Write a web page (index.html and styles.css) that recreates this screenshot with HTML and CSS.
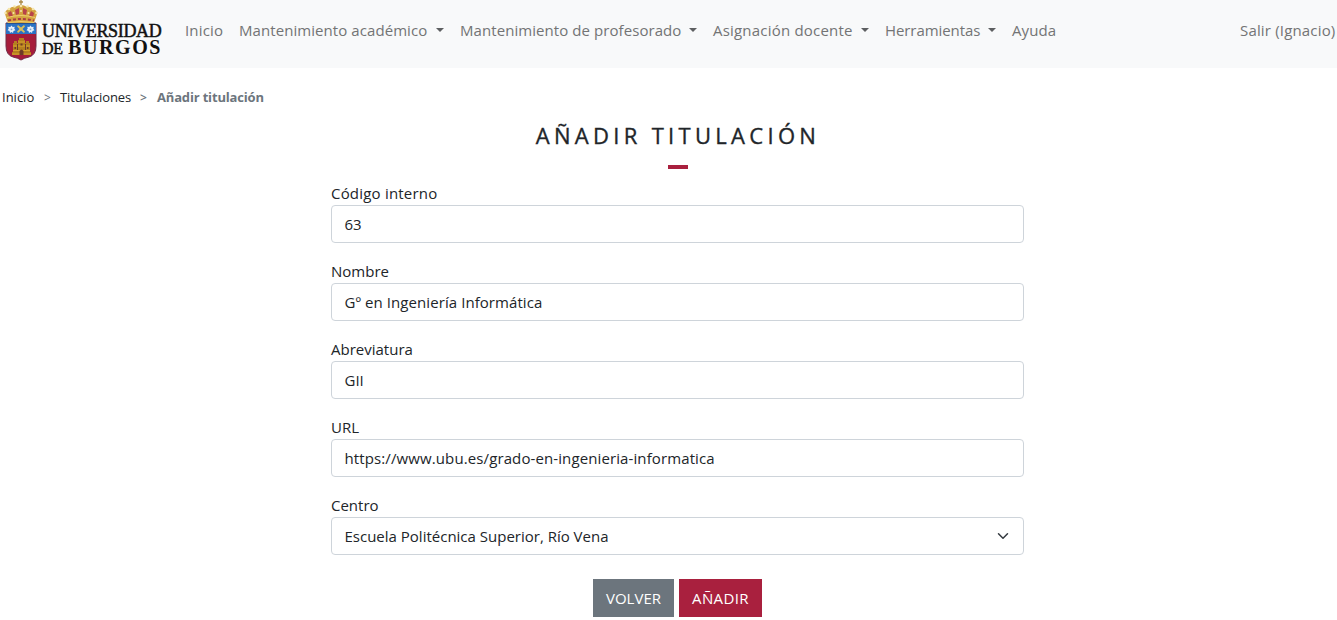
FILE: index.html
```html
<!DOCTYPE html>
<html lang="es">
<head>
<meta charset="utf-8">
<title>Añadir titulación</title>
<link rel="stylesheet" href="styles.css">
</head>
<body>
<header class="navbar">
  <a class="brand" href="#">
    <svg class="crest" viewBox="0 0 36 61" width="36" height="61">
      <path d="M2 23h30v23q0 9-7 11-5 1-8 3-3-2-8-3-7-2-7-11z" fill="#a51c3b" stroke="#722b45" stroke-width="1"/>
      <path d="M2 24h30v10H2z" fill="#2a72c4"/>
      <path d="M2 23.500h30" stroke="#29518c"/>
      <path d="M14 25l3 2.500 3-2.500 1 1.500-2.500 2.500 2.500 2.500-1 1.500-3-2.500-3 2.500-1-1.500 2.500-2.500-2.500-2.500z" fill="#d9be5c"/>
      <path d="M7.500 25.500l1.200 1.500 2-.3-.4 2 1.200 1.500-2 .8-.5 1.900-1.500-1-1.500 1-.5-1.900-2-.8 1.200-1.500-.4-2 2 .3zM26.500 25.500l1.200 1.500 2-.3-.4 2 1.200 1.500-2 .8-.5 1.900-1.500-1-1.500 1-.5-1.900-2-.8 1.200-1.500-.4-2 2 .3z" fill="#e5eef8"/>
      <g fill="#7fa6d2"><circle cx="7.500" cy="29.300" r=".9"/><circle cx="26.500" cy="29.300" r=".9"/></g>
      <path d="M8 55v-3h1v-9h1v-2h3v2h1v-3h1v-2h5v2h1v3h1v-2h3v2h1v9h1v3z" fill="#b5801f"/>
      <path d="M9 46h17M9 50.500h17M14 42h7M8 54h19" stroke="#d9a52e"/>
      <path d="M15.500 55v-4q2-3 4 0v4zM10.500 47h1.500v2h-1.500zM23 47h1.500v2H23zM16.500 43.500h2v2h-2zM13 44h1v6h-1zM21 44h1v6h-1z" fill="#6e3b27"/>
      <path d="M4 23L1 14q0-4 4-5 3-3 6-2 3-2 6-2t6 2q3-1 6 2 4 1 4 5l-3 9z" fill="#d3a340"/>
      <path d="M5 17l-1-4 3-2 2 5zM12 15l-1-5 4-2v6zM19 14V8l4 2-1 5zM25 16l2-5 3 2-1 4z" fill="#b8444a"/>
      <path d="M4 20.500q13-3 26 0" fill="none" stroke="#ad3a44" stroke-width="2" stroke-dasharray="3 2"/>
      <path d="M3 17.500q14-4 28 0M4 22.500q13-2 26 0" fill="none" stroke="#f0cf6c" stroke-width="1"/>
      <path d="M17 0v6M15 2h4" stroke="#a98742" stroke-width="1.300"/>
      <g fill="#f6e6aa"><circle cx="1.500" cy="13" r="1.300"/><circle cx="5" cy="9" r="1.300"/><circle cx="10.500" cy="6.500" r="1.300"/><circle cx="17" cy="6" r="1.300"/><circle cx="23.500" cy="6.500" r="1.300"/><circle cx="29" cy="9" r="1.300"/><circle cx="32.500" cy="13" r="1.300"/><circle cx="9.500" cy="13" r="1"/><circle cx="17" cy="11" r="1"/><circle cx="24.500" cy="13" r="1"/></g>
    </svg>
    <span class="wordmark"><span class="wm-top">UNIVERSIDAD</span><span class="wm-bottom"><span class="wm-de">DE</span><span class="wm-city">BURGOS</span></span></span>
  </a>
  <nav class="menu">
    <a class="link inicio" href="#">Inicio</a>
    <a class="link drop academico" href="#">Mantenimiento académico</a>
    <a class="link drop profesorado" href="#">Mantenimiento de profesorado</a>
    <a class="link drop docente" href="#">Asignación docente</a>
    <a class="link drop herramientas" href="#">Herramientas</a>
    <a class="link ayuda" href="#">Ayuda</a>
  </nav>
  <a class="link salir" href="#">Salir (Ignacio)</a>
</header>
<div class="crumbs"><a class="crumb-home" href="#">Inicio</a><span class="sep">&gt;</span><a class="crumb-list" href="#">Titulaciones</a><span class="sep sep-bold">&gt;</span><b class="crumb-here">Añadir titulación</b></div>
<main class="content">
  <h1 class="title">AÑADIR TITULACIÓN</h1>
  <div class="rule"></div>
  <form class="form">
    <div class="field"><label class="label l-codigo">Código interno</label><div class="control">63</div></div>
    <div class="field"><label class="label">Nombre</label><div class="control v-nombre">Gº en Ingeniería Informática</div></div>
    <div class="field"><label class="label l-abrev">Abreviatura</label><div class="control">GII</div></div>
    <div class="field"><label class="label">URL</label><div class="control v-url">https://www.ubu.es/grado-en-ingenieria-informatica</div></div>
    <div class="field"><label class="label">Centro</label><div class="control select"><span class="v-centro">Escuela Politécnica Superior, Río Vena</span><svg class="chevron" viewBox="0 0 16 16" width="16" height="12"><path d="m2 5 6 6 6-6" fill="none" stroke="#343a40" stroke-width="2" stroke-linecap="round" stroke-linejoin="round"/></svg></div></div>
    <div class="actions"><button type="button" class="btn back">VOLVER</button><button type="button" class="btn add">AÑADIR</button></div>
  </form>
</main>
</body>
</html>
```
FILE: styles.css
```css
* { box-sizing: border-box; }
body { margin: 0; height: 620px; overflow: hidden; background: #fff; color: #212529; font: 15px/24px "Open Sans", "Noto Sans", sans-serif; }
a { color: inherit; text-decoration: none; }
.navbar { display: flex; height: 68px; background: #f8f9fa; padding-left: 4px; }
.brand { display: flex; width: 181px; color: #111; }
.crest { display: block; width: 36px; height: 61px; }
.wordmark { display: flex; flex-direction: column; padding: 22px 0 0 2px; font-family: "Liberation Serif", serif; white-space: nowrap; }
.wm-top { font-size: 18px; line-height: 18px; letter-spacing: -.32px; -webkit-text-stroke: .5px #111; }
.wm-bottom { display: flex; align-items: baseline; line-height: 15px; }
.wm-de { width: 26px; font-size: 16px; letter-spacing: -.4px; -webkit-text-stroke: .5px #111; }
.wm-city { font-size: 20px; font-weight: bold; letter-spacing: 1.6px; }
.menu { display: flex; padding-top: 18px; gap: 16px; }
.link { color: #737475; font-size: 15px; white-space: nowrap; letter-spacing: .07px; }
.drop { display: flex; justify-content: space-between; align-items: center; height: 24px; }
.drop::after { content: ""; border: 4px solid transparent; border-top-color: #5d5f61; border-bottom: 0; }
.inicio { width: 38px; letter-spacing: .15px; }
.academico { width: 205px; }
.profesorado { width: 237px; }
.docente { width: 156px; letter-spacing: .2px; }
.herramientas { width: 111px; letter-spacing: -.08px; }
.ayuda { width: 44px; }
.salir { margin: 18px 0 0 auto; width: 97px; letter-spacing: .17px; }
.crumbs { display: flex; height: 52px; padding: 17px 0 0 2px; font-size: 13px; }
.crumb-home { width: 42px; }
.crumb-list { width: 80px; letter-spacing: -.1px; }
.sep { width: 16px; padding-top: 1px; color: #6c757d; font-size: 12px; }
.sep-bold { font-weight: 600; width: 17px; }
.crumb-here { color: #6c757d; white-space: nowrap; letter-spacing: -.17px; }
.content { width: 693px; margin-left: 331px; }
.title { margin: 0; padding-left: 1px; height: 45px; text-align: center; font-size: 22px; font-weight: 500; line-height: 31px; letter-spacing: 4.3px; white-space: nowrap; -webkit-text-stroke: .35px #212529; }
.rule { width: 20px; height: 4px; margin: 0 auto; background: #a9203e; }
.form { padding-top: 13px; }
.field { height: 78px; }
.label { display: block; height: 23px; line-height: 22px; }
.l-codigo { letter-spacing: .2px; }
.control { height: 38px; border: 1px solid #ced4da; border-radius: 4px; padding: 6px 12px 6px 12.500px; white-space: nowrap; }
.v-nombre { letter-spacing: .07px; }
.v-url { letter-spacing: .11px; }
.select { display: flex; justify-content: space-between; align-items: center; }
.actions { display: flex; justify-content: center; gap: 5px; padding-top: 7px; }
.btn { height: 38px; border: 0; padding: 0; color: #fff; font: inherit; }
.back { width: 81px; background: #6c757d; }
.add { width: 83px; background: #a9203e; letter-spacing: .4px; }
```
